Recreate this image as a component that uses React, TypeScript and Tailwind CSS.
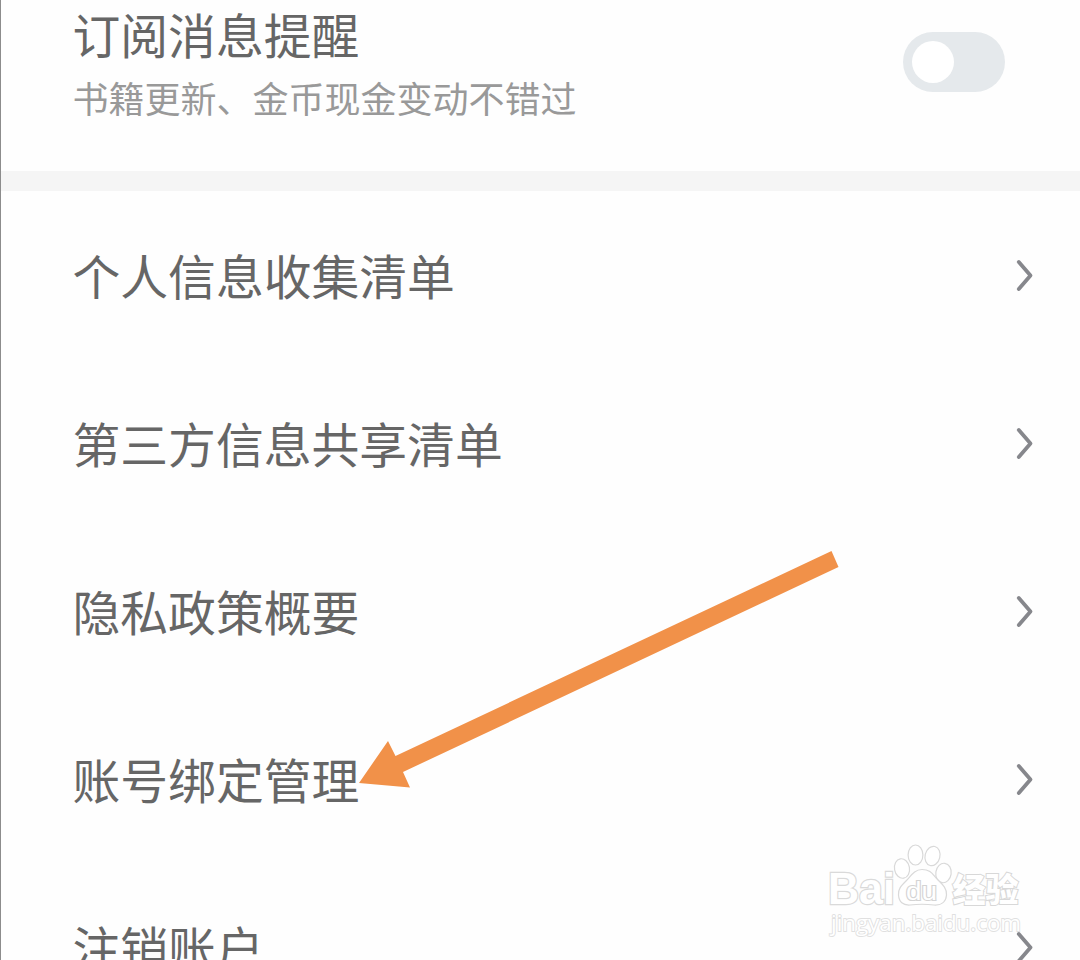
const items = [
  "个人信息收集清单",
  "第三方信息共享清单",
  "隐私政策概要",
  "账号绑定管理",
  "注销账户",
];

function Chevron() {
  return (
    <svg
      className="h-10 w-5 shrink-0"
      viewBox="0 0 20 40"
      fill="none"
      stroke="#86878c"
      strokeWidth="3.8"
      strokeLinecap="round"
      strokeLinejoin="round"
    >
      <path d="M3.8 7 L15.5 20.5 L3.8 34" />
    </svg>
  );
}

function Watermark() {
  return (
    <svg
      className="absolute left-[819px] top-[840px] h-[105px] w-[210px]"
      viewBox="820 840 210 105"
      fill="#ffffff"
      stroke="#d9d9d9"
      strokeWidth="1.2"
    >
      <ellipse cx="902" cy="868.5" rx="7.5" ry="9.8" transform="rotate(-10 902 868.5)" />
      <ellipse cx="915.5" cy="855" rx="7.4" ry="10" />
      <ellipse cx="932.5" cy="856" rx="7.4" ry="9.8" transform="rotate(14 932.5 856)" />
      <ellipse cx="943.5" cy="873" rx="7.7" ry="9.8" transform="rotate(8 943.5 873)" />
      <path d="M922 869.5 C914 869.5 911 876 906 881 C901 886 898 889 898.5 895 C899 902 903 905.5 910 905 C918 904 926 904 934 905 C941 905.5 946 902 946.5 895 C947 888 942 884 938 880 C933 875 931 869.5 922 869.5 Z" />
      <text
        className="font-['Liberation_Sans',sans-serif]"
        x="828"
        y="904"
        fontSize="44.5"
        fontWeight="700"
        textLength="67"
        lengthAdjust="spacingAndGlyphs"
        stroke="#dadada"
        strokeWidth="2.4"
        paintOrder="stroke"
      >
        Bai
      </text>
      <text
        className="font-['Liberation_Sans',sans-serif]"
        x="906"
        y="900"
        fontSize="25"
        textLength="31"
        lengthAdjust="spacingAndGlyphs"
        stroke="#d4d4d4"
        strokeWidth="2.2"
        paintOrder="stroke"
      >
        du
      </text>
      <text
        className="font-['Noto_Sans_CJK_SC',sans-serif]"
        x="952.5"
        y="901.5"
        fontSize="33"
        fontWeight="900"
        stroke="#d8d8d8"
        strokeWidth="2"
        paintOrder="stroke"
      >
        经验
      </text>
      <text
        className="font-['Open_Sans',sans-serif]"
        x="831"
        y="930.5"
        fontSize="22.5"
        fontWeight="500"
        textLength="190"
        lengthAdjust="spacingAndGlyphs"
        stroke="#e0e0e0"
        strokeWidth="1.8"
        paintOrder="stroke"
      >
        jingyan.baidu.com
      </text>
    </svg>
  );
}

export default function App() {
  return (
    <div className="relative h-[960px] w-[1080px] overflow-hidden border-l border-[#8c8c8c] bg-[#fefefe] font-['Noto_Sans_CJK_SC',sans-serif]">
      <div className="flex h-[171px] justify-between pl-[71.5px] pr-[75px]">
        <div className="flex flex-col pt-px">
          <span className="text-[47.8px] leading-[66px] text-[#666666]">订阅消息提醒</span>
          <span className="text-[36px] leading-[60px] text-[#999999]">
            书籍更新、金币现金变动不错过
          </span>
        </div>
        <button
          type="button"
          role="switch"
          aria-checked="false"
          className="mt-8 flex h-[60px] w-[102px] items-center rounded-full bg-[#e5e9ec] pl-[9px]"
        >
          <span className="h-[42px] w-[42px] rounded-full bg-white" />
        </button>
      </div>

      <div className="h-5 bg-[#f5f5f5]" />

      <ul>
        {items.map((label) => (
          <li key={label} className="flex h-[168px] items-center justify-between pl-[71.5px] pr-[45px]">
            <span className="text-[47.8px] leading-[66px] text-[#666666]">{label}</span>
            <Chevron />
          </li>
        ))}
      </ul>

      <svg
        className="absolute left-[349px] top-[540px] h-[260px] w-[500px]"
        viewBox="350 540 500 260"
      >
        <polygon
          fill="#f19149"
          points="359,783 388,741 395.5,756 831.5,551 838.5,567 403,772 410,787.5"
        />
      </svg>

      <Watermark />
    </div>
  );
}
